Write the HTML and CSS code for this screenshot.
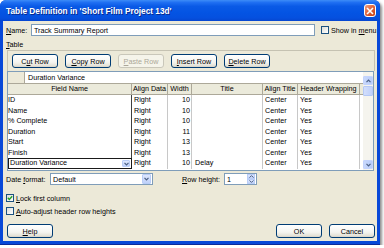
FILE: index.html
```html
<!DOCTYPE html>
<html lang="en">
<head>
    <meta charset="UTF-8">
    <title>Table Definition</title>
    <link rel="stylesheet" href="styles.css">
</head>
<body>
    <div class="window">
        <div class="titlebar">
            <span class="title">Table Definition in 'Short Film Project 13d'</span>
            <span class="close">
                <svg width="8" height="8" viewBox="0 0 8 8"><path d="M1 1L7 7M7 1L1 7" stroke="#fff" stroke-width="1.6"/></svg>
            </span>
        </div>
        <div class="content">
            <div class="name-row">
                <span class="name-label"><u>N</u>ame:</span>
                <div class="textbox name-box">Track Summary Report</div>
                <span class="check"></span>
                <span class="check-label">Show in <u>m</u>enu</span>
            </div>
            <div class="section-label"><u>T</u>able</div>
            <div class="toolbar">
                <button class="btn">C<u>u</u>t Row</button>
                <button class="btn"><u>C</u>opy Row</button>
                <button class="btn" disabled><u>P</u>aste Row</button>
                <button class="btn"><u>I</u>nsert Row</button>
                <button class="btn"><u>D</u>elete Row</button>
            </div>
            <div class="grid">
                <div class="grid-main">
                    <div class="edit-row">
                        <div class="corner"></div>
                        <div class="edit-cell">Duration Variance</div>
                    </div>
                    <div class="head-row">
                        <div class="hc c-field">Field Name</div>
                        <div class="hc c-align">Align Data</div>
                        <div class="hc c-width">Width</div>
                        <div class="hc c-title">Title</div>
                        <div class="hc c-atitle">Align Title</div>
                        <div class="hc c-wrap">Header Wrapping</div>
                    </div>
                    <div class="data-row">
                        <div class="dc c-field">ID</div>
                        <div class="dc c-align">Right</div>
                        <div class="dc c-width">10</div>
                        <div class="dc c-title"></div>
                        <div class="dc c-atitle">Center</div>
                        <div class="dc c-wrap">Yes</div>
                    </div>
                    <div class="data-row">
                        <div class="dc c-field">Name</div>
                        <div class="dc c-align">Right</div>
                        <div class="dc c-width">10</div>
                        <div class="dc c-title"></div>
                        <div class="dc c-atitle">Center</div>
                        <div class="dc c-wrap">Yes</div>
                    </div>
                    <div class="data-row">
                        <div class="dc c-field">% Complete</div>
                        <div class="dc c-align">Right</div>
                        <div class="dc c-width">10</div>
                        <div class="dc c-title"></div>
                        <div class="dc c-atitle">Center</div>
                        <div class="dc c-wrap">Yes</div>
                    </div>
                    <div class="data-row">
                        <div class="dc c-field">Duration</div>
                        <div class="dc c-align">Right</div>
                        <div class="dc c-width">11</div>
                        <div class="dc c-title"></div>
                        <div class="dc c-atitle">Center</div>
                        <div class="dc c-wrap">Yes</div>
                    </div>
                    <div class="data-row">
                        <div class="dc c-field">Start</div>
                        <div class="dc c-align">Right</div>
                        <div class="dc c-width">13</div>
                        <div class="dc c-title"></div>
                        <div class="dc c-atitle">Center</div>
                        <div class="dc c-wrap">Yes</div>
                    </div>
                    <div class="data-row">
                        <div class="dc c-field">Finish</div>
                        <div class="dc c-align">Right</div>
                        <div class="dc c-width">13</div>
                        <div class="dc c-title"></div>
                        <div class="dc c-atitle">Center</div>
                        <div class="dc c-wrap">Yes</div>
                    </div>
                    <div class="data-row">
                        <div class="dc c-field editing">
                            <span class="edit-text">Duration Variance</span>
                            <span class="drop small"><svg width="5" height="4" viewBox="0 0 5 4"><path d="M0.5 0.8L2.5 2.8L4.5 0.8" stroke="#4D6185" stroke-width="1.2" fill="none"/></svg></span>
                        </div>
                        <div class="dc c-align">Right</div>
                        <div class="dc c-width">10</div>
                        <div class="dc c-title">Delay</div>
                        <div class="dc c-atitle">Center</div>
                        <div class="dc c-wrap">Yes</div>
                    </div>
                </div>
                <div class="scrollbar">
                    <span class="sb-btn"><svg width="5" height="4" viewBox="0 0 5 4"><path d="M0.5 3.2L2.5 1.2L4.5 3.2" stroke="#4D6185" stroke-width="1.2" fill="none"/></svg></span>
                    <span class="sb-thumb"></span>
                    <span class="sb-track"></span>
                    <span class="sb-btn"><svg width="5" height="4" viewBox="0 0 5 4"><path d="M0.5 0.8L2.5 2.8L4.5 0.8" stroke="#4D6185" stroke-width="1.2" fill="none"/></svg></span>
                </div>
            </div>
            <div class="format-row">
                <span class="format-label">Date <u>f</u>ormat:</span>
                <div class="textbox select">
                    <span class="select-text">Default</span>
                    <span class="drop"><svg width="5" height="4" viewBox="0 0 5 4"><path d="M0.5 0.8L2.5 2.8L4.5 0.8" stroke="#4D6185" stroke-width="1.2" fill="none"/></svg></span>
                </div>
                <span class="height-label"><u>R</u>ow height:</span>
                <div class="textbox spinner">
                    <span class="select-text">1</span>
                    <span class="spin">
                        <span class="spin-btn"><svg width="5" height="3" viewBox="0 0 5 3"><path d="M0.5 2.6L2.5 0.6L4.5 2.6" stroke="#4D6185" stroke-width="1" fill="none"/></svg></span>
                        <span class="spin-btn"><svg width="5" height="3" viewBox="0 0 5 3"><path d="M0.5 0.4L2.5 2.4L4.5 0.4" stroke="#4D6185" stroke-width="1" fill="none"/></svg></span>
                    </span>
                </div>
            </div>
            <div class="option-row lock-row">
                <span class="check checked"><svg width="6" height="6" viewBox="0 0 6 6"><path d="M0.8 2.8L2.3 4.4L5.2 1.2" stroke="#21A121" stroke-width="1.4" fill="none"/></svg></span>
                <span class="check-label"><u>L</u>ock first column</span>
            </div>
            <div class="option-row auto-row">
                <span class="check"></span>
                <span class="check-label"><u>A</u>uto-adjust header row heights</span>
            </div>
            <div class="footer">
                <button class="btn"><u>H</u>elp</button>
                <span class="spacer"></span>
                <button class="btn">OK</button>
                <button class="btn">Cancel</button>
            </div>
        </div>
    </div>
</body>
</html>
```

FILE: styles.css
```css
body {
    margin: 0;
    background-color: white;
    font-family: "Liberation Sans", Arial, sans-serif;
}
.window {
    width: 380px;
    height: 245px;
    display: flex;
    flex-direction: column;
    background-color: #0848d8;
    border-radius: 6px 6px 0 0;
    box-shadow: 2px 2px 3px rgba(0, 0, 0, 0.45);
    border-bottom: 1px solid #0a2a9a;
    box-sizing: border-box;
}
.titlebar {
    height: 21px;
    flex: none;
    display: flex;
    align-items: center;
    padding: 0 4px 0 6px;
    border-radius: 6px 6px 0 0;
    background: linear-gradient(#3d8cf7 0%, #1f6ff2 12%, #0a5ae6 30%, #0454e3 60%, #0550df 85%, #0646d0 100%);
    color: white;
    font-weight: bold;
    font-size: 8.3px;
}
.title {
    flex: 1;
    text-shadow: 1px 1px 0 #0a2a8c;
}
.close {
    width: 12px;
    height: 13px;
    box-sizing: border-box;
    display: flex;
    align-items: center;
    justify-content: center;
    border: 1px solid white;
    border-radius: 3px;
    background: linear-gradient(135deg, #f0a184 0%, #e2683f 45%, #c63d12 100%);
}
.content {
    flex: 1;
    margin: 0 3px 3px;
    display: flex;
    flex-direction: column;
    background-color: #ece9d8;
    font-size: 7.2px;
    color: black;
    white-space: nowrap;
}
.name-row {
    margin-top: 3px;
    height: 12px;
    display: flex;
    align-items: center;
    padding-left: 3px;
}
.name-label {
    width: 25px;
}
.textbox {
    height: 12px;
    box-sizing: border-box;
    border: 1px solid #7f9db9;
    background-color: white;
    display: flex;
    align-items: center;
    padding-left: 2px;
}
.name-box {
    width: 284px;
}
.check {
    width: 8px;
    height: 8px;
    flex: none;
    box-sizing: border-box;
    border: 1px solid #1c5180;
    background: linear-gradient(135deg, #dcdcd7, #ffffff);
    display: flex;
    align-items: center;
    justify-content: center;
}
.name-row .check {
    margin-left: 6px;
}
.check-label {
    margin-left: 2px;
}
.section-label {
    margin-top: 3px;
    height: 11px;
    line-height: 11px;
    padding-left: 3px;
}
.toolbar {
    height: 21px;
    box-sizing: border-box;
    margin: 0 2px 0 4px;
    padding: 3px 0 0 4px;
    border: 1px solid #c5c2b2;
    border-bottom: none;
    display: flex;
    gap: 7px;
    align-items: flex-start;
}
.btn {
    width: 46px;
    height: 14px;
    padding: 0;
    border: 1px solid #003c74;
    border-radius: 3px;
    background: linear-gradient(#ffffff 0%, #f4f4f0 60%, #e3e1d6 90%, #d6d0c5 100%);
    font-family: "Liberation Sans", Arial, sans-serif;
    font-size: 7.2px;
    color: black;
}
.btn:disabled {
    border-color: #c9c7ba;
    background: #f5f4ea;
    color: #aca899;
}
.grid {
    height: 100px;
    box-sizing: border-box;
    margin: 0 3px 0 4px;
    border: 1px solid #7f9db9;
    background-color: white;
    display: flex;
}
.grid-main {
    flex: 1;
    display: flex;
    flex-direction: column;
}
.edit-row {
    height: 12px;
    display: flex;
}
.corner {
    width: 17px;
    background-color: #ece9d8;
    border-right: 1px solid #aca899;
    border-bottom: 1px solid #aca899;
    box-sizing: border-box;
}
.edit-cell {
    flex: 1;
    padding-left: 3px;
    line-height: 11px;
    border-bottom: 1px solid #aca899;
}
.head-row {
    height: 11px;
    display: flex;
    background-color: #ebeadb;
    border-bottom: 1px solid #aca899;
    box-sizing: border-box;
}
.hc {
    box-sizing: border-box;
    text-align: center;
    line-height: 10px;
    border-right: 1px solid #aca899;
    overflow: hidden;
}
.data-row {
    height: 10.55px;
    display: flex;
}
.dc {
    box-sizing: border-box;
    line-height: 10.55px;
    border-right: 1px solid #c8c8c8;
    padding-left: 2px;
}
.c-field { width: 124px; }
.c-align { width: 36px; }
.c-width { width: 24px; }
.c-title { width: 71px; }
.c-atitle { width: 35px; }
.c-wrap { width: 62px; }
.dc.c-field {
    padding-left: 0;
    border-right: 1px solid #404040;
}
.dc.c-width {
    text-align: right;
    padding-right: 1px;
}
.dc.c-title {
    padding-left: 3px;
}
.dc.editing {
    display: flex;
    align-items: center;
    border: 1.5px solid #1a1a1a;
    padding-left: 1px;
}
.edit-text {
    flex: 1;
}
.drop {
    width: 9px;
    height: 10px;
    box-sizing: border-box;
    display: flex;
    align-items: center;
    justify-content: center;
    border: 1px solid #b9cdf7;
    border-radius: 1px;
    background: linear-gradient(#dde7fd, #bfd1f9);
}
.drop.small {
    width: 8px;
    height: 7px;
    margin-right: 1px;
}
.scrollbar {
    width: 10px;
    display: flex;
    flex-direction: column;
    background-color: #f5f4ee;
    padding: 4px 0 1px;
    box-sizing: border-box;
}
.sb-btn {
    height: 9px;
    box-sizing: border-box;
    display: flex;
    align-items: center;
    justify-content: center;
    border: 1px solid #c3d3fd;
    border-radius: 1px;
    background: linear-gradient(90deg, #c8d8fc, #b6cbfa);
}
.sb-thumb {
    height: 10px;
    margin-top: 1px;
    box-sizing: border-box;
    border: 1px solid #b4c8f6;
    border-radius: 1px;
    background: linear-gradient(90deg, #d2defc, #bfd0fa);
}
.sb-track {
    flex: 1;
}
.format-row {
    margin-top: 2px;
    height: 12px;
    display: flex;
    align-items: center;
    padding-left: 3px;
}
.format-label {
    width: 44px;
}
.select {
    width: 103px;
    padding-right: 1px;
}
.select-text {
    flex: 1;
}
.height-label {
    margin-left: 29px;
    width: 42px;
}
.spinner {
    width: 33px;
    padding-right: 1px;
}
.spin {
    display: flex;
    flex-direction: column;
}
.spin-btn {
    width: 8px;
    height: 5px;
    box-sizing: border-box;
    display: flex;
    align-items: center;
    justify-content: center;
    border: 1px solid #b9cdf7;
    background: linear-gradient(#dde7fd, #bfd1f9);
}
.option-row {
    height: 8px;
    display: flex;
    align-items: center;
    padding-left: 3px;
}
.lock-row {
    margin-top: 9px;
}
.auto-row {
    margin-top: 5px;
}
.footer {
    margin: 9px 2px 0 4px;
    display: flex;
    gap: 7px;
}
.spacer {
    flex: 1;
}
```
